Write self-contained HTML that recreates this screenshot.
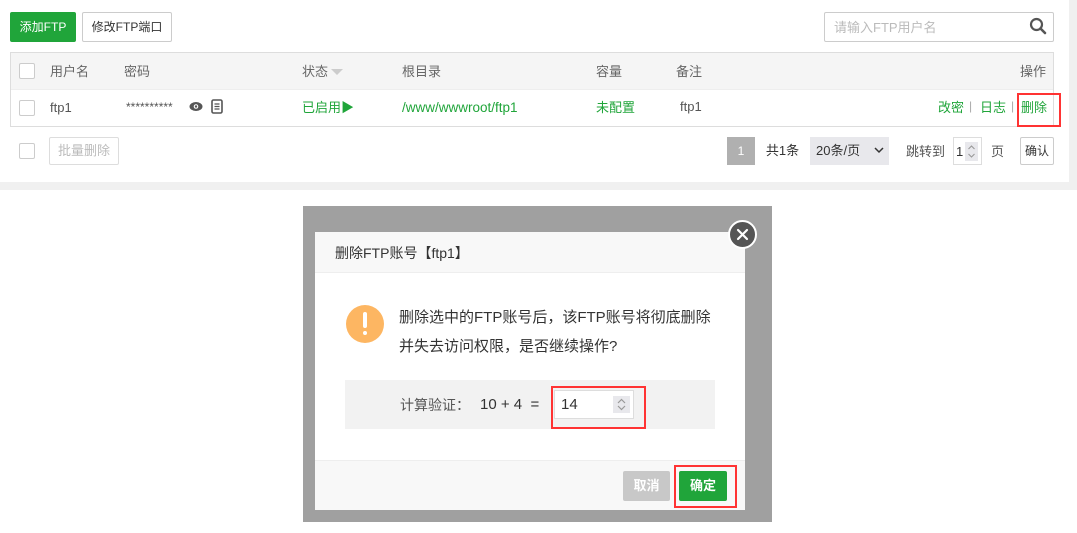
<!DOCTYPE html>
<html><head><meta charset="utf-8"><style>
*{margin:0;padding:0;box-sizing:border-box}
body{width:1077px;height:533px;background:#fff;position:relative;overflow:hidden;font-family:"Liberation Sans","Noto Sans CJK SC",sans-serif;font-size:12px;color:#666}
.a{position:absolute}
.t{position:absolute;white-space:nowrap;line-height:1}
.g{color:#20a53a}
.cb{position:absolute;width:16px;height:16px;border:1px solid #ccc;border-radius:2px;background:#fff}
</style></head><body>
<div class="a" style="left:0;top:182px;width:1077px;height:8px;background:#f0f0f0"></div>
<div class="a" style="left:1069px;top:0;width:8px;height:190px;background:#f0f0f0"></div>
<div class="a" style="left:0;top:0;width:1069px;height:182px;background:#fff;border-bottom-right-radius:4px"></div>

<div class="a" style="left:10px;top:12px;width:66px;height:30px;background:#20a53a;border-radius:2px;color:#fff;line-height:30px;text-align:center">添加FTP</div>
<div class="a" style="left:82px;top:12px;width:90px;height:30px;border:1px solid #ccc;border-radius:2px;color:#333;line-height:28px;text-align:center">修改FTP端口</div>

<div class="a" style="left:824px;top:12px;width:230px;height:30px;border:1px solid #ccc;border-radius:2px"></div>
<div class="t" style="left:834px;top:21px;color:#bbb;font-size:13px">请输入FTP用户名</div>
<svg class="a" style="left:1029px;top:17px" width="18" height="18" viewBox="0 0 18 18"><circle cx="7.5" cy="7.5" r="5.5" fill="none" stroke="#555" stroke-width="2.2"/><path d="M11.5 11.5l4.5 4.5" stroke="#555" stroke-width="2.6" stroke-linecap="round"/></svg>

<div class="a" style="left:10px;top:52px;width:1044px;height:75px;border:1px solid #ddd"></div>
<div class="a" style="left:11px;top:53px;width:1042px;height:36px;background:#f5f5f5"></div>
<div class="a" style="left:11px;top:89px;width:1042px;height:1px;background:#eee"></div>
<div class="cb" style="left:19px;top:63px"></div>
<div class="t" style="left:50px;top:65px;font-size:13px">用户名</div>
<div class="t" style="left:124px;top:65px;font-size:13px">密码</div>
<div class="t" style="left:302px;top:65px;font-size:13px">状态</div>
<svg class="a" style="left:331px;top:69px" width="12" height="7"><path d="M0 0h12L6 6z" fill="#ccc"/></svg>
<div class="t" style="left:402px;top:65px;font-size:13px">根目录</div>
<div class="t" style="left:596px;top:65px;font-size:13px">容量</div>
<div class="t" style="left:676px;top:65px;font-size:13px">备注</div>
<div class="t" style="left:1020px;top:65px;font-size:13px">操作</div>

<div class="cb" style="left:19px;top:100px"></div>
<div class="t" style="left:50px;top:101px;color:#555;font-size:13px">ftp1</div>
<div class="t" style="left:126px;top:101px;color:#555;font-size:12px">**********</div>
<svg class="a" style="left:189px;top:101px" width="14" height="11" viewBox="0 0 14 11"><ellipse cx="7" cy="5.5" rx="6.5" ry="4.5" fill="#555"/><circle cx="7" cy="5.5" r="2.3" fill="#fff"/><circle cx="7" cy="5.5" r="1.2" fill="#555"/></svg>
<svg class="a" style="left:211px;top:99px" width="12" height="15" viewBox="0 0 12 15"><rect x="1" y="1" width="10" height="13" rx="1.5" fill="#fff" stroke="#555" stroke-width="1.6"/><path d="M3.5 5h5M3.5 7.5h5M3.5 10h5" stroke="#555" stroke-width="1.2"/></svg>
<div class="t g" style="left:302px;top:101px;font-size:13px">已启用▶</div>
<div class="t g" style="left:402px;top:101px;font-size:13.5px">/www/wwwroot/ftp1</div>
<div class="t g" style="left:596px;top:101px;font-size:13px">未配置</div>
<div class="t" style="left:680px;top:100px;color:#555;font-size:13px">ftp1</div>
<div class="t g" style="left:938px;top:101px;font-size:13px">改密</div>
<div class="t" style="left:969px;top:100px;color:#aaa">|</div>
<div class="t g" style="left:980px;top:101px;font-size:13px">日志</div>
<div class="t" style="left:1011px;top:100px;color:#aaa">|</div>
<div class="t g" style="left:1021px;top:101px;font-size:13px">删除</div>
<div class="a" style="left:1017px;top:93px;width:44px;height:34px;border:2px solid #f33"></div>

<div class="cb" style="left:19px;top:143px"></div>
<div class="a" style="left:49px;top:137px;width:70px;height:28px;border:1px solid #ddd;border-radius:2px;color:#bbb;line-height:26px;text-align:center;font-size:13px">批量删除</div>

<div class="a" style="left:727px;top:137px;width:28px;height:28px;background:#b0b0b0;color:#fff;line-height:28px;text-align:center">1</div>
<div class="a" style="left:755px;top:137px;width:55px;height:28px;background:#fff;color:#333;line-height:28px;text-align:center;font-size:13px">共1条</div>
<div class="a" style="left:810px;top:137px;width:79px;height:28px;background:#e8e8ec;color:#333;line-height:28px;padding-left:6px;font-size:13px">20条/页</div>
<svg class="a" style="left:874px;top:147px" width="10" height="7"><path d="M1 1l4 4 4-4" fill="none" stroke="#333" stroke-width="1.5"/></svg>
<div class="t" style="left:906px;top:145px;color:#555;font-size:13px">跳转到</div>
<div class="a" style="left:953px;top:137px;width:29px;height:28px;border:1px solid #ddd"></div>
<div class="t" style="left:956px;top:145px;color:#333;font-size:13px">1</div>
<div class="a" style="left:965px;top:142px;width:13px;height:19px;background:#e8e8ec"></div>
<svg class="a" style="left:966px;top:143px" width="11" height="17"><path d="M2.5 6l3-3 3 3M2.5 11l3 3 3-3" fill="none" stroke="#999" stroke-width="1.1"/></svg>
<div class="t" style="left:991px;top:145px;color:#555;font-size:13px">页</div>
<div class="a" style="left:1020px;top:137px;width:34px;height:28px;border:1px solid #ccc;border-radius:2px;color:#333;line-height:26px;text-align:center">确认</div>

<div class="a" style="left:303px;top:206px;width:469px;height:316px;background:#a0a0a0"></div>
<div class="a" style="left:315px;top:232px;width:430px;height:278px;background:#fff"></div>
<div class="a" style="left:315px;top:232px;width:430px;height:41px;background:#f8f8f8;border-bottom:1px solid #eee"></div>
<div class="t" style="left:335px;top:246px;color:#333;font-size:14px">删除FTP账号【ftp1】</div>
<div class="a" style="left:728px;top:220px;width:29px;height:29px;border-radius:50%;background:#555;border:2px solid #fff"></div>
<svg class="a" style="left:735px;top:227px" width="15" height="15"><path d="M3 3l9 9M12 3l-9 9" stroke="#fff" stroke-width="2.2" stroke-linecap="round"/></svg>
<div class="a" style="left:346px;top:305px;width:38px;height:38px;border-radius:50%;background:#fdb662"></div>
<div class="a" style="left:363px;top:312px;width:4px;height:16px;background:#fff;border-radius:2px"></div>
<div class="a" style="left:363px;top:331px;width:4px;height:4px;background:#fff;border-radius:2px"></div>
<div class="t" style="left:399px;top:310px;color:#333;font-size:15px">删除选中的FTP账号后，该FTP账号将彻底删除</div>
<div class="t" style="left:399px;top:339px;color:#333;font-size:15px">并失去访问权限，是否继续操作?</div>
<div class="a" style="left:345px;top:380px;width:370px;height:49px;background:#f2f2f2"></div>
<div class="t" style="left:400px;top:398px;color:#555;font-size:14px">计算验证：</div>
<div class="t" style="left:480px;top:397px;color:#333;font-size:15px">10 + 4 &nbsp;=</div>
<div class="a" style="left:554px;top:390px;width:80px;height:29px;background:#fff;border:1px solid #ddd"></div>
<div class="t" style="left:561px;top:397px;color:#333;font-size:15px">14</div>
<div class="a" style="left:613px;top:396px;width:17px;height:17px;background:#e8e8ec"></div>
<svg class="a" style="left:616px;top:397px" width="11" height="15"><path d="M2 6l3.5-3.5L9 6M2 9l3.5 3.5L9 9" fill="none" stroke="#999" stroke-width="1.2"/></svg>
<div class="a" style="left:551px;top:386px;width:95px;height:43px;border:2px solid #f33"></div>
<div class="a" style="left:315px;top:460px;width:430px;height:50px;background:#f8f8f8;border-top:1px solid #eee"></div>
<div class="a" style="left:623px;top:471px;width:47px;height:30px;background:#c8c8c8;border-radius:2px;color:#fff;line-height:30px;text-align:center;font-weight:bold;font-size:13px">取消</div>
<div class="a" style="left:679px;top:471px;width:48px;height:30px;background:#20a53a;border-radius:2px;color:#fff;line-height:30px;text-align:center;font-weight:bold;font-size:13px">确定</div>
<div class="a" style="left:674px;top:465px;width:63px;height:43px;border:2px solid #f33"></div>
</body></html>
